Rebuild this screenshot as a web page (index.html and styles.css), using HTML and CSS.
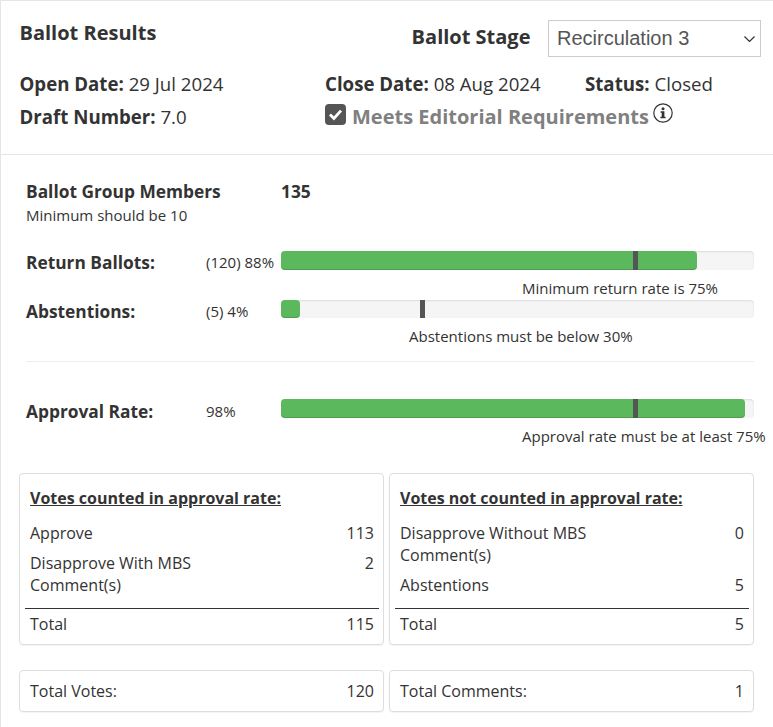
FILE: index.html
```html
<!DOCTYPE html>
<html lang="en">
<head>
    <meta charset="UTF-8">
    <meta name="viewport" content="width=device-width, initial-scale=1.0">
    <title>Ballot Results</title>
    <link rel="stylesheet" href="styles.css">
</head>
<body>
    <!-- Header -->
    <div class="header">
        <div class="title-row">
            <h1 class="title">Ballot Results</h1>
            <div class="stage">
                <label class="stage-label" for="stage-select">Ballot Stage</label>
                <div class="select-wrap">
                    <select class="stage-select" id="stage-select">
                        <option>Recirculation 3</option>
                    </select>
                    <svg class="select-arrow" width="11" height="6" viewBox="0 0 11 6">
                        <path d="M.5.5l5 5 5-5" fill="none" stroke="#333" stroke-width="1.2"/>
                    </svg>
                </div>
            </div>
        </div>
        <div class="info-grid">
            <div><b>Open Date:</b> 29 Jul 2024</div>
            <div><b>Close Date:</b> 08 Aug 2024</div>
            <div><b>Status:</b> Closed</div>
            <div><b>Draft Number:</b> 7.0</div>
            <div class="editorial">
                <svg class="check" width="21" height="21" viewBox="0 0 21 21">
                    <rect x="0" y="0" width="21" height="21" rx="4" fill="#555"/>
                    <path d="M5 10.6l3.9 3.8L16 6.6" fill="none" stroke="#fff" stroke-width="2.8"/>
                </svg>
                <b class="editorial-text">Meets Editorial Requirements</b>
                <svg class="info-icon" width="20" height="20" viewBox="0 0 20 20">
                    <circle cx="10" cy="10" r="9.2" fill="none" stroke="#333" stroke-width="1.2"/>
                    <circle cx="10" cy="5.8" r="1.5" fill="#333"/>
                    <path d="M7.6 8.3h3.8v5.5h1.2v1.5H7.4v-1.5h1.3V9.8H7.6z" fill="#333"/>
                </svg>
            </div>
        </div>
    </div>

    <!-- Stats -->
    <div class="stats">
        <div class="members">
            <div class="members-label">Ballot Group Members</div>
            <div class="members-count">135</div>
        </div>
        <div class="members-note">Minimum should be 10</div>

        <div class="stat-row stat-first">
            <div class="stat-label">Return Ballots:</div>
            <div class="stat-value">(120) 88%</div>
            <div class="bar">
                <div class="bar-fill fill-88"></div>
                <div class="bar-mark mark-75"></div>
            </div>
        </div>
        <div class="bar-note note-return">Minimum return rate is 75%</div>

        <div class="stat-row">
            <div class="stat-label">Abstentions:</div>
            <div class="stat-value">(5) 4%</div>
            <div class="bar bar-short">
                <div class="bar-fill fill-4"></div>
                <div class="bar-mark mark-30"></div>
            </div>
        </div>
        <div class="bar-note note-abstain">Abstentions must be below 30%</div>

        <hr class="divider">

        <div class="stat-row stat-approval">
            <div class="stat-label">Approval Rate:</div>
            <div class="stat-value">98%</div>
            <div class="bar">
                <div class="bar-fill fill-98"></div>
                <div class="bar-mark mark-75"></div>
            </div>
        </div>
        <div class="bar-note note-approval">Approval rate must be at least 75%</div>
    </div>

    <!-- Vote cards -->
    <div class="cards">
        <div class="card">
            <div class="card-title">Votes counted in approval rate:</div>
            <div class="card-body">
                <div class="card-line"><span class="line-name">Approve</span><span>113</span></div>
                <div class="card-line"><span class="line-name">Disapprove With MBS Comment(s)</span><span>2</span></div>
            </div>
            <div class="card-total"><span>Total</span><span>115</span></div>
        </div>
        <div class="card">
            <div class="card-title">Votes not counted in approval rate:</div>
            <div class="card-body">
                <div class="card-line"><span class="line-name">Disapprove Without MBS Comment(s)</span><span>0</span></div>
                <div class="card-line"><span class="line-name">Abstentions</span><span>5</span></div>
            </div>
            <div class="card-total"><span>Total</span><span>5</span></div>
        </div>
    </div>
    <div class="cards cards-totals">
        <div class="card card-small"><span>Total Votes:</span><span>120</span></div>
        <div class="card card-small"><span>Total Comments:</span><span>1</span></div>
    </div>
</body>
</html>
```

FILE: styles.css
```css
body {
    font-family: "Open Sans", sans-serif;
    font-size: 15px;
    color: #333;
    margin: 0;
    background-color: #fff;
    border-top: 1px solid #e5e5e5;
    border-left: 1px solid #e5e5e5;
    height: 726px;
    overflow: hidden;
}

b {
    font-weight: 700;
}

.header {
    height: 154px;
    box-sizing: border-box;
    padding: 19px 12px 0 18.5px;
    border-bottom: 1px solid #e5e5e5;
}

.title-row {
    display: flex;
    justify-content: space-between;
}

.title {
    font-size: 20px;
    font-weight: 700;
    line-height: 25px;
    margin: 0;
}

.stage {
    display: flex;
    align-items: center;
    gap: 17.5px;
}

.stage-label {
    font-size: 20px;
    font-weight: 700;
    margin-bottom: 5px;
}

.select-wrap {
    position: relative;
    display: flex;
}

.stage-select {
    appearance: none;
    width: 213px;
    height: 37px;
    padding: 0 8px 2px;
    font-family: "Liberation Sans", Arial, sans-serif;
    font-size: 20px;
    color: #555;
    background-color: #fff;
    border: 1px solid #ccc;
}

.select-arrow {
    position: absolute;
    top: 16px;
    right: 6px;
}

.info-grid {
    display: grid;
    grid-template-columns: 305.5px 260px 1fr;
    row-gap: 5px;
    margin-top: 13px;
    font-size: 18.67px;
    line-height: 28px;
}

.editorial {
    display: flex;
    align-items: center;
    grid-column: span 2;
}

.check {
    margin: 0 6px 6px 0;
}

.editorial-text {
    font-size: 20px;
    color: #808080;
}

.info-icon {
    margin: 0 0 8px 4px;
}

.stats {
    padding: 0 19px 0 25px;
}

.members {
    display: flex;
    margin-top: 24px;
    font-size: 17.33px;
    font-weight: 700;
    line-height: 24px;
}

.members-label {
    width: 255px;
}

.members-note {
    margin-top: 2px;
    line-height: 20px;
}

.stat-row {
    display: flex;
    align-items: center;
    height: 24px;
}

.stat-first {
    margin-top: 25px;
}

.stat-label {
    width: 180px;
    font-size: 17.33px;
    font-weight: 700;
}

.stat-value {
    width: 75px;
}

.bar {
    position: relative;
    flex: 1;
    height: 19px;
    margin-top: -4px;
    border-radius: 4px;
    background-color: #f5f5f5;
    box-shadow: inset 0 1px 2px rgba(0, 0, 0, 0.1);
}

.bar-short {
    height: 18px;
}

.stat-approval .bar {
    margin-top: -6px;
}

.bar-fill {
    height: 100%;
    border-radius: 4px;
    background-color: #5cb85c;
    box-shadow: inset 0 -1px 0 rgba(0, 0, 0, 0.15);
}

.fill-88 { width: 88%; }
.fill-4 { width: 4%; }
.fill-98 { width: 98%; }

.bar-mark {
    position: absolute;
    top: 0;
    width: 5px;
    height: 100%;
    background-color: #555;
}

.mark-75 { left: 352px; }
.mark-30 { left: 139px; }

.bar-note {
    line-height: 20px;
    margin-bottom: 1px;
    white-space: nowrap;
}

.note-return {
    margin-top: 4px;
    margin-left: 496px;
}

.note-abstain {
    margin-top: 3px;
    margin-left: 383px;
}

.note-approval {
    margin-top: 3px;
    margin-left: 496px;
}

.divider {
    border: 0;
    border-top: 1px solid #eee;
    margin: 15px 0 37px;
}

.cards {
    display: flex;
    gap: 5.5px;
    margin: 27px 18px 0;
}

.cards-totals {
    margin-top: 25px;
}

.card {
    width: 364.5px;
    box-sizing: border-box;
    padding: 13px 3.5px 5px 5px;
    border: 1px solid #ddd;
    border-radius: 4px;
    box-shadow: 0 1px 1px rgba(0, 0, 0, 0.05);
    font-size: 16px;
    line-height: 22px;
}

.card-title {
    padding: 0 5px;
    font-weight: 700;
    text-decoration: underline;
}

.card-body {
    min-height: 100px;
    padding: 13px 5px 0;
    border-bottom: 1px solid #333;
    box-sizing: border-box;
}

.card-line {
    display: flex;
    justify-content: space-between;
    margin-bottom: 8px;
}

.line-name {
    width: 190px;
}

.card-total {
    display: flex;
    justify-content: space-between;
    padding: 4px 5px;
}

.card-small {
    display: flex;
    justify-content: space-between;
    padding: 9px 8.5px 9px 10px;
}
```
